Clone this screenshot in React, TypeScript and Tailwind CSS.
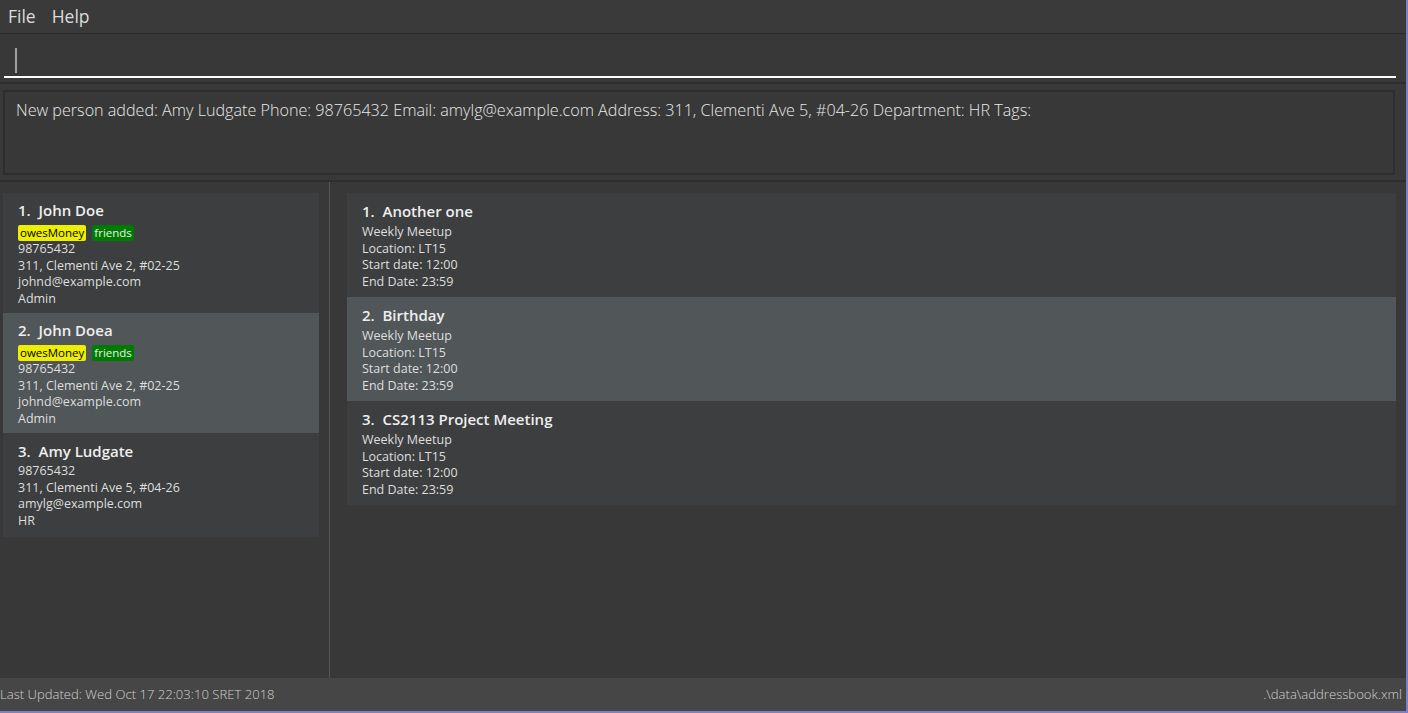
import React from "react";

const font = { fontFamily: '"Open Sans", "Noto Sans", sans-serif' };

type Person = { name: string; tags: string[]; phone: string; address: string; email: string; dept: string };
const persons: Person[] = [
  { name: "John Doe", tags: ["owesMoney", "friends"], phone: "98765432", address: "311, Clementi Ave 2, #02-25", email: "johnd@example.com", dept: "Admin" },
  { name: "John Doea", tags: ["owesMoney", "friends"], phone: "98765432", address: "311, Clementi Ave 2, #02-25", email: "johnd@example.com", dept: "Admin" },
  { name: "Amy Ludgate", tags: [], phone: "98765432", address: "311, Clementi Ave 5, #04-26", email: "amylg@example.com", dept: "HR" },
];

const events = ["Another one", "Birthday", "CS2113 Project Meeting"];

function Tag({ t }: { t: string }) {
  if (t === "owesMoney")
    return <span className="bg-[#eeee00] text-black text-[11.5px] leading-[16px] h-[16px] px-[2px] rounded-[2px]">owesMoney</span>;
  return <span className="bg-[#007a00] text-[#e6f3e6] text-[11.5px] leading-[16px] h-[16px] px-[2px] rounded-[2px]">friends</span>;
}

export default function App() {
  return (
    <div style={font} className="w-[1408px] h-[713px] bg-[#383838] flex flex-col overflow-hidden border-r-2 border-b-2 border-[#7f7fc8] text-[#d8d8d8]">
      {/* menu bar */}
      <div className="h-[34px] shrink-0 flex items-center gap-[16px] pl-[8px] pb-[1px] border-b border-[#2b2b2b] text-[17.5px] text-[#dcdcdc] bg-[#3a3a3a]">
        <span>File</span>
        <span>Help</span>
      </div>
      {/* command box */}
      <div className="h-[50px] shrink-0 pl-[4px] pr-[10px] pt-[10px] border-b-2 border-[#2e2e2e]">
        <div className="h-[34px] border-b-2 border-white flex items-center pl-[11px]">
          <div className="w-[2px] h-[25px] bg-[#a0a0a0]" />
        </div>
      </div>
      {/* result display */}
      <div className="h-[98px] shrink-0 pt-[6px] pl-[3px] pr-[11px] pb-[5px] border-b-2 border-[#2e2e2e]">
        <div className="h-full border-2 border-[#2e2e2e] pl-[11px] pt-[6px] text-[16.15px] font-light text-[#e8e8e8]">
          New person added: Amy Ludgate Phone: 98765432 Email: amylg@example.com Address: 311, Clementi Ave 5, #04-26 Department: HR Tags:
        </div>
      </div>
      {/* lists */}
      <div className="flex-1 flex min-h-0">
        <div className="w-[330px] shrink-0 pl-[3px] pr-[10px] pt-[11px] border-r border-[#555555]">
          {persons.map((p, i) => (
            <div
              key={i}
              className={`${i === 1 ? "bg-[#515658]" : "bg-[#3c3e3f]"} pl-[15px] ${p.tags.length > 0 ? "pt-[7px] pb-[6px]" : "pt-[8px] pb-[8px]"}`}
            >
              <div className="text-[15px] leading-[20px] font-semibold text-[#eeeeee]">
                {i + 1}.&nbsp;&nbsp;{p.name}
              </div>
              {p.tags.length > 0 && (
                <div className="flex gap-[6px] mt-[5px] h-[16px] items-center">
                  {p.tags.map((t) => <Tag key={t} t={t} />)}
                </div>
              )}
              <div className={`text-[12.5px] leading-[16.5px] text-[#dedede] ${p.tags.length > 0 ? "mt-[0px]" : "mt-[2px]"}`}>
                <div>{p.phone}</div>
                <div>{p.address}</div>
                <div>{p.email}</div>
                <div>{p.dept}</div>
              </div>
            </div>
          ))}
        </div>
        <div className="flex-1 pl-[17px] pr-[10px] pt-[11px]">
          {events.map((e, i) => (
            <div key={i} className={`${i === 1 ? "bg-[#515658]" : "bg-[#3c3e3f]"} pl-[15px] pt-[8px] pb-[7px]`}>
              <div className="text-[15px] leading-[20px] font-semibold text-[#eeeeee]">
                {i + 1}.&nbsp;&nbsp;{e}
              </div>
              <div className="text-[12.5px] leading-[16.5px] text-[#dedede] mt-[3px]">
                <div>Weekly Meetup</div>
                <div>Location: LT15</div>
                <div>Start date: 12:00</div>
                <div>End Date: 23:59</div>
              </div>
            </div>
          ))}
        </div>
      </div>
      {/* status bar */}
      <div className="h-[33px] shrink-0 bg-[#464646] flex items-center justify-between pr-[4px] text-[13.1px] text-[#d0d0d0] font-light">
        <span>Last Updated: Wed Oct 17 22:03:10 SRET 2018</span>
        <span>.\data\addressbook.xml</span>
      </div>
    </div>
  );
}
